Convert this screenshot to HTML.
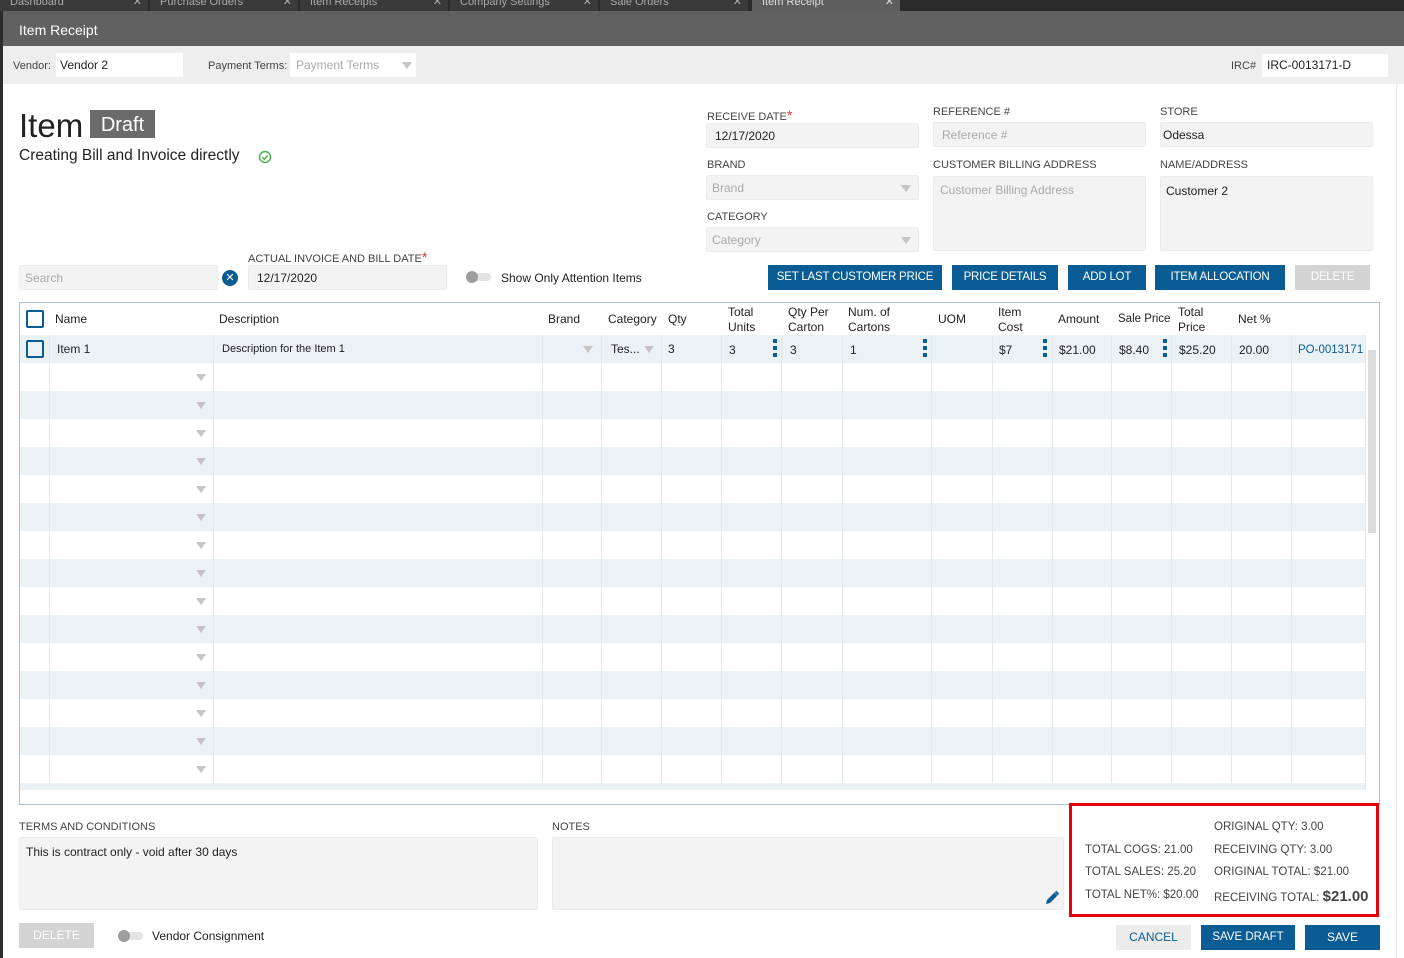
<!DOCTYPE html>
<html><head><meta charset="utf-8"><style>
*{box-sizing:border-box;margin:0;padding:0}
body{width:1404px;height:958px;position:relative;overflow:hidden;background:#fff;font-family:"Liberation Sans",sans-serif;font-size:12px;color:#222}
.a{position:absolute}
.tab{position:absolute;top:0;height:11px;width:148px;background:#3a3a3a;color:#aaa;font-size:11px;line-height:0;overflow:hidden}
.tab span{position:absolute;top:-3px;left:10px;line-height:10px}
.tab i{position:absolute;right:6px;top:-3px;font-style:normal;line-height:10px}
.lbl{position:absolute;font-size:11px;color:#444}
.inp{position:absolute;background:#f3f3f3;border:1px solid #ececec;border-radius:2px;font-size:12px;padding-left:8px}
.ph{color:#aaa}
.btn{position:absolute;top:265px;height:25px;background:#0a5d94;color:#fff;font-size:11.5px;text-align:center;line-height:25px;letter-spacing:-0.2px}
.hd{position:absolute;font-size:12px;color:#222;line-height:15px}
.tri{position:absolute;width:0;height:0;border-left:5px solid transparent;border-right:5px solid transparent;border-top:7px solid #c5c5c5}
.dots{position:absolute;width:4px;height:18px;background:linear-gradient(#0a5d94 0 4px,transparent 4px 7px,#0a5d94 7px 11px,transparent 11px 14px,#0a5d94 14px 18px)}
.sm{position:absolute;font-size:11.5px;color:#444}
</style></head><body>
<div class="a" style="left:0;top:0;width:1404px;height:11px;background:#2b2b2b"></div>
<div class="tab" style="left:0"><span>Dashboard</span><i>✕</i></div>
<div class="tab" style="left:150px"><span>Purchase Orders</span><i>✕</i></div>
<div class="tab" style="left:300px"><span>Item Receipts</span><i>✕</i></div>
<div class="tab" style="left:450px"><span>Company Settings</span><i>✕</i></div>
<div class="tab" style="left:600px"><span>Sale Orders</span><i>✕</i></div>
<div class="tab" style="left:752px;background:#5e5e5e;color:#ddd"><span>Item Receipt</span><i>✕</i></div>
<div class="a" style="left:0;top:11px;width:1404px;height:35px;background:#616161;color:#fff;font-size:14px;line-height:38px;padding-left:19px">Item Receipt</div>
<div class="a" style="left:0;top:46px;width:1404px;height:38px;background:#eeeeee"></div>
<div class="a" style="left:0;top:11px;width:3px;height:947px;background:#2b2b2b"></div>
<div class="a" style="left:1396px;top:84px;width:1px;height:874px;background:#e6e6e6"></div>
<div class="lbl" style="left:13px;top:60px">Vendor:</div>
<div class="a" style="left:56px;top:53px;width:127px;height:24px;background:#fff;font-size:12px;line-height:24px;padding-left:4px">Vendor 2</div>
<div class="lbl" style="left:208px;top:60px">Payment Terms:</div>
<div class="a" style="left:290px;top:53px;width:126px;height:24px;background:#fff;font-size:12px;line-height:24px;padding-left:6px;color:#aaa">Payment Terms</div>
<div class="tri" style="left:402px;top:62px"></div>
<div class="lbl" style="left:1231px;top:60px">IRC#</div>
<div class="a" style="left:1262px;top:54px;width:126px;height:23px;background:#fff;font-size:12px;line-height:23px;padding-left:5px">IRC-0013171-D</div>

<div class="a" style="left:19px;top:106px;font-size:33px;color:#222;line-height:40px">Item</div>
<div class="a" style="left:90px;top:110px;width:65px;height:28px;background:#6b6b6b;color:#fff;font-size:20px;line-height:30px;text-align:center">Draft</div>
<div class="a" style="left:19px;top:147px;font-size:15.5px;color:#222">Creating Bill and Invoice directly</div>
<svg class="a" style="left:258px;top:150px" width="14" height="14" viewBox="0 0 14 14"><circle cx="7" cy="7" r="5.5" fill="none" stroke="#4caf50" stroke-width="1.5"/><path d="M4.3 7.2l2 2 3.5-3.8" fill="none" stroke="#4caf50" stroke-width="1.5"/></svg>

<div class="lbl" style="left:707px;top:107px">RECEIVE DATE<span style="color:#e53935;font-size:14px">*</span></div>
<div class="inp" style="left:706px;top:123px;width:213px;height:25px;line-height:24px">12/17/2020</div>
<div class="lbl" style="left:933px;top:106px">REFERENCE #</div>
<div class="inp ph" style="left:933px;top:122px;width:213px;height:25px;line-height:24px">Reference #</div>
<div class="lbl" style="left:1160px;top:106px">STORE</div>
<div class="inp" style="left:1160px;top:122px;width:213px;height:25px;line-height:24px;padding-left:2px">Odessa</div>
<div class="lbl" style="left:707px;top:159px">BRAND</div>
<div class="inp ph" style="left:706px;top:175px;width:213px;height:25px;line-height:24px;padding-left:5px">Brand</div>
<div class="tri" style="left:901px;top:185px"></div>
<div class="lbl" style="left:933px;top:159px">CUSTOMER BILLING ADDRESS</div>
<div class="inp ph" style="left:933px;top:176px;width:213px;height:75px;line-height:26px;padding-left:6px">Customer Billing Address</div>
<div class="lbl" style="left:1160px;top:159px">NAME/ADDRESS</div>
<div class="inp" style="left:1160px;top:176px;width:213px;height:75px;line-height:28px;padding-left:5px">Customer 2</div>
<div class="lbl" style="left:707px;top:211px">CATEGORY</div>
<div class="inp ph" style="left:706px;top:227px;width:213px;height:25px;line-height:24px;padding-left:5px">Category</div>
<div class="tri" style="left:901px;top:237px"></div>

<div class="lbl" style="left:248px;top:249px">ACTUAL INVOICE AND BILL DATE<span style="color:#e53935;font-size:14px">*</span></div>
<div class="inp ph" style="left:19px;top:265px;width:199px;height:25px;line-height:24px;padding-left:5px">Search</div>
<div class="a" style="left:222px;top:270px;width:16px;height:16px;border-radius:50%;background:#0a5d94;color:#fff;font-size:11px;line-height:16px;text-align:center">✕</div>
<div class="inp" style="left:248px;top:265px;width:199px;height:25px;line-height:24px">12/17/2020</div>
<div class="a" style="left:467px;top:273px;width:24px;height:8px;border-radius:4px;background:#e3e3e3"></div>
<div class="a" style="left:466px;top:271px;width:12px;height:12px;border-radius:50%;background:#9e9e9e"></div>
<div class="a" style="left:501px;top:271px;font-size:12px">Show Only Attention Items</div>
<div class="btn" style="left:768px;width:174px">SET LAST CUSTOMER PRICE</div>
<div class="btn" style="left:952px;width:106px">PRICE DETAILS</div>
<div class="btn" style="left:1068px;width:78px">ADD LOT</div>
<div class="btn" style="left:1155px;width:130px">ITEM ALLOCATION</div>
<div class="btn" style="left:1295px;width:75px;background:#d3d3d3">DELETE</div>

<div class="a" style="left:19px;top:302px;width:1361px;height:503px;border:1px solid #a9c0d4"></div>
<div id="rows"></div>
<script>
var h='';var cols=[49,213,542,601,661,721,781,842,931,992,1052,1111,1171,1231,1291,1365];
for(var i=0;i<16;i++){var y=335+i*28;var bg=i%2==0?'#eaf2f6':'#fff';
h+='<div class="a" style="left:20px;top:'+y+'px;width:1345px;height:28px;background:'+bg+'"></div>';
if(i>0)h+='<div class="tri" style="left:196px;top:'+(y+11)+'px"></div>';}
for(var c=0;c<cols.length;c++)h+='<div class="a" style="left:'+cols[c]+'px;top:335px;width:1px;height:455px;background:#e2e8ec"></div>';
document.getElementById('rows').innerHTML=h;
</script>
<div class="a" style="left:20px;top:783px;width:1345px;height:7px;background:#eaf2f6"></div>
<div class="a" style="left:20px;top:790px;width:1359px;height:14px;background:#fff"></div>
<div class="a" style="left:1368px;top:350px;width:8px;height:183px;background:#dcdcdc"></div>
<div class="a" style="left:26px;top:310px;width:18px;height:18px;border:2px solid #0a5d94;border-radius:2px"></div>
<div class="a" style="left:26px;top:340px;width:18px;height:18px;border:2px solid #0a5d94;border-radius:2px"></div>
<div class="hd" style="left:55px;top:312px">Name</div>
<div class="hd" style="left:219px;top:312px">Description</div>
<div class="hd" style="left:548px;top:312px">Brand</div>
<div class="hd" style="left:608px;top:312px">Category</div>
<div class="hd" style="left:668px;top:312px">Qty</div>
<div class="hd" style="left:728px;top:305px">Total<br>Units</div>
<div class="hd" style="left:788px;top:305px">Qty Per<br>Carton</div>
<div class="hd" style="left:848px;top:305px">Num. of<br>Cartons</div>
<div class="hd" style="left:938px;top:312px">UOM</div>
<div class="hd" style="left:998px;top:305px">Item<br>Cost</div>
<div class="hd" style="left:1058px;top:312px">Amount</div>
<div class="hd" style="left:1118px;top:312px;font-size:11.5px">Sale Price</div>
<div class="hd" style="left:1178px;top:305px">Total<br>Price</div>
<div class="hd" style="left:1238px;top:312px">Net %</div>
<div class="hd" style="left:57px;top:342px">Item 1</div>
<div class="hd" style="left:222px;top:342px;font-size:11px">Description for the Item 1</div>
<div class="tri" style="left:583px;top:346px"></div>
<div class="hd" style="left:611px;top:342px">Tes...</div>
<div class="tri" style="left:644px;top:346px"></div>
<div class="hd" style="left:668px;top:342px">3</div>
<div class="hd" style="left:729px;top:343px">3</div>
<div class="dots" style="left:773px;top:339px"></div>
<div class="hd" style="left:790px;top:343px">3</div>
<div class="hd" style="left:850px;top:343px">1</div>
<div class="dots" style="left:923px;top:339px"></div>
<div class="hd" style="left:999px;top:343px">$7</div>
<div class="dots" style="left:1043px;top:339px"></div>
<div class="hd" style="left:1059px;top:343px">$21.00</div>
<div class="hd" style="left:1119px;top:343px">$8.40</div>
<div class="dots" style="left:1163px;top:339px"></div>
<div class="hd" style="left:1179px;top:343px">$25.20</div>
<div class="hd" style="left:1239px;top:343px">20.00</div>
<div class="hd" style="left:1298px;top:343px;color:#0a5d94;font-size:11.5px">PO-0013171</div>

<div class="lbl" style="left:19px;top:821px">TERMS AND CONDITIONS</div>
<div class="inp" style="left:19px;top:837px;width:519px;height:73px;padding:7px 6px">This is contract only - void after 30 days</div>
<div class="lbl" style="left:552px;top:821px">NOTES</div>
<div class="inp" style="left:552px;top:837px;width:512px;height:73px"></div>
<svg class="a" style="left:1044px;top:890px" width="16" height="16" viewBox="0 0 16 16"><path d="M2 14l1-4 7.5-7.5 3 3L6 13z" fill="#0a5d94"/><path d="M11.5 1.5l3 3" stroke="#0a5d94" stroke-width="2"/></svg>
<div class="a" style="left:1069px;top:803px;width:310px;height:114px;border:3px solid #e8000b"></div>
<div class="sm" style="left:1214px;top:821px">ORIGINAL QTY: 3.00</div>
<div class="sm" style="left:1085px;top:844px">TOTAL COGS: 21.00</div>
<div class="sm" style="left:1214px;top:844px">RECEIVING QTY: 3.00</div>
<div class="sm" style="left:1085px;top:866px">TOTAL SALES: 25.20</div>
<div class="sm" style="left:1214px;top:866px">ORIGINAL TOTAL: $21.00</div>
<div class="sm" style="left:1085px;top:889px">TOTAL NET%: $20.00</div>
<div class="sm" style="left:1214px;top:888px">RECEIVING TOTAL: <b style="font-size:15px">$21.00</b></div>

<div class="a" style="left:19px;top:923px;width:75px;height:25px;background:#d3d3d3;color:#fff;text-align:center;line-height:25px">DELETE</div>
<div class="a" style="left:119px;top:932px;width:24px;height:8px;border-radius:4px;background:#e3e3e3"></div>
<div class="a" style="left:118px;top:930px;width:12px;height:12px;border-radius:50%;background:#9e9e9e"></div>
<div class="a" style="left:152px;top:929px">Vendor Consignment</div>
<div class="a" style="left:1116px;top:925px;width:75px;height:25px;background:#ececec;color:#0a5d94;text-align:center;line-height:25px">CANCEL</div>
<div class="a" style="left:1201px;top:925px;width:94px;height:25px;background:#0a5d94;color:#fff;text-align:center;line-height:25px;font-size:11.5px">SAVE DRAFT</div>
<div class="a" style="left:1305px;top:925px;width:75px;height:25px;background:#0a5d94;color:#fff;text-align:center;line-height:25px">SAVE</div>
</body></html>
